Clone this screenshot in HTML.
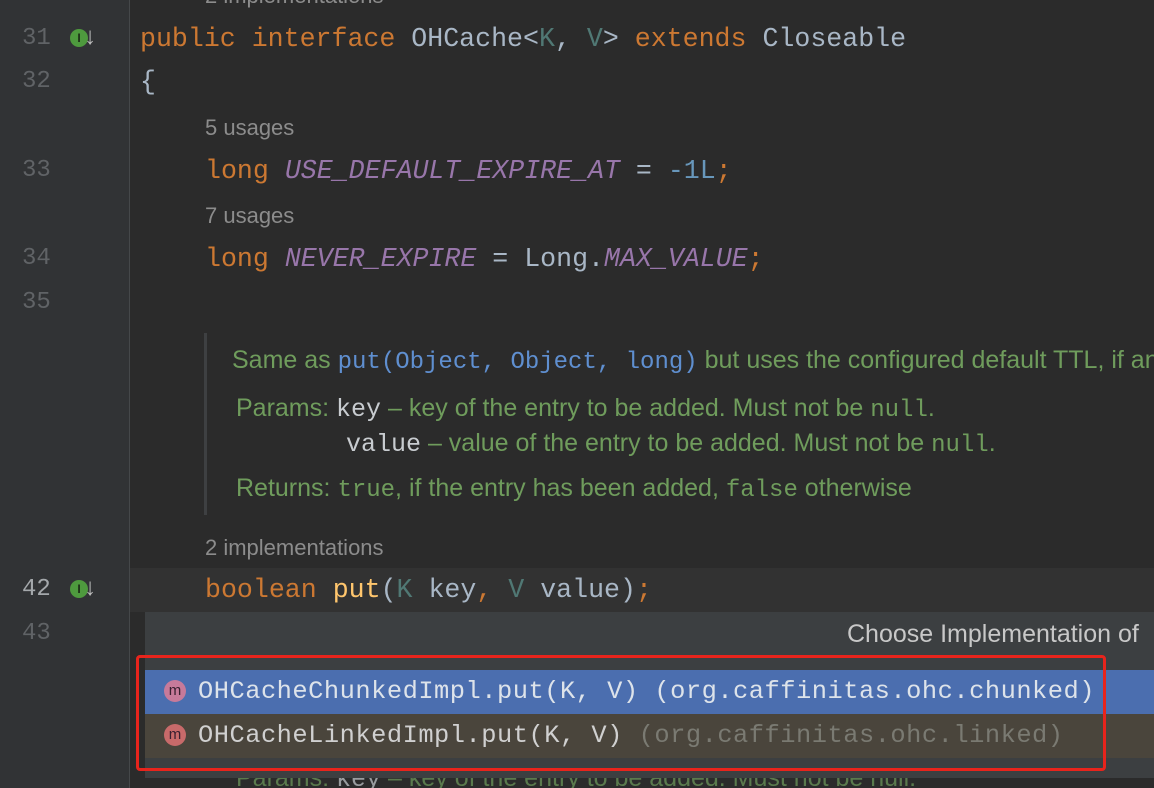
<!DOCTYPE html>
<html><head><style>
html,body{margin:0;width:1154px;height:788px;overflow:hidden}
body{background:#2b2b2b;position:relative;font-family:"Liberation Mono",monospace;font-size:26.6px;}
.g{position:absolute;left:0;top:0;width:129px;height:788px;background:#313335;border-right:1px solid #45484a}
.l{position:absolute;height:44px;line-height:44px;white-space:pre;color:#a9b7c6}
.n{color:#606366;font-size:24px;left:22px}
.k{color:#cc7832}.c{color:#9876aa;font-style:italic}.t{color:#507874}.num{color:#6897bb}.f{color:#ffc66d}
.h{color:#8c8c8c;font-family:"Liberation Sans",sans-serif;font-size:22px}
.d{color:#6f9c5c;font-family:"Liberation Sans",sans-serif;font-size:25px}
.dc{color:#5f8fd0;font-family:"Liberation Mono",monospace;font-size:24px}
.dm{color:#c8ccd0;font-family:"Liberation Mono",monospace;font-size:25px}
.dg{color:#6f9c5c;font-family:"Liberation Mono",monospace;font-size:24px}
.ic{position:absolute;width:18px;height:18px;border-radius:50%;background:#4e9a3e;color:#1b2b16;font:bold 12px "Liberation Sans";text-align:center;line-height:18px}
.m{display:inline-block;width:22px;height:22px;border-radius:50%;background:#c77a9a;color:#3a2030;font:15px "Liberation Sans";text-align:center;line-height:21px;vertical-align:middle;margin-right:12px;letter-spacing:0}
</style></head><body>
<div class="g"></div>
<div class="l h" style="left:205px;top:-26px">2 implementations</div>
<div class="l n" style="top:17px">31</div>
<div class="ic" style="left:70px;top:29px">I</div><div class="l" style="left:83px;top:17px;color:#bbb;font-size:24px">↓</div>
<div class="l" style="left:140px;top:17px"><span class="k">public interface</span> OHCache&lt;<span class="t">K</span>, <span class="t">V</span>&gt; <span class="k">extends</span> Closeable</div>
<div class="l n" style="top:60px">32</div>
<div class="l" style="left:140px;top:60px">{</div>
<div class="l h" style="left:205px;top:106px">5 usages</div>
<div class="l n" style="top:149px">33</div>
<div class="l" style="left:205px;top:149px"><span class="k">long</span> <span class="c">USE_DEFAULT_EXPIRE_AT</span> = <span class="num">-1L</span><span class="k">;</span></div>
<div class="l h" style="left:205px;top:194px">7 usages</div>
<div class="l n" style="top:237px">34</div>
<div class="l" style="left:205px;top:237px"><span class="k">long</span> <span class="c">NEVER_EXPIRE</span> = Long.<span class="c">MAX_VALUE</span><span class="k">;</span></div>
<div class="l n" style="top:281px">35</div>
<div style="position:absolute;left:204px;top:333px;width:3px;height:182px;background:#3e4042"></div>
<div class="l d" style="left:232px;top:338px">Same as <span class="dc">put(Object, Object, long)</span> but uses the configured default TTL, if any.</div>
<div class="l d" style="left:236px;top:386px">Params: <span class="dm">key</span> – key of the entry to be added. Must not be <span class="dg">null</span>.</div>
<div class="l d" style="left:346px;top:421px"><span class="dm">value</span> – value of the entry to be added. Must not be <span class="dg">null</span>.</div>
<div class="l d" style="left:236px;top:466px">Returns: <span class="dg">true</span>, if the entry has been added, <span class="dg">false</span> otherwise</div>
<div class="l h" style="left:205px;top:526px">2 implementations</div>
<div style="position:absolute;left:130px;top:568px;width:1024px;height:44px;background:#323232"></div>
<div class="l n" style="top:568px;color:#a4a8ab">42</div>
<div class="ic" style="left:70px;top:580px">I</div><div class="l" style="left:83px;top:568px;color:#bbb;font-size:24px">↓</div>
<div class="l" style="left:205px;top:568px"><span class="k">boolean</span> <span class="f">put</span>(<span class="t">K</span> key<span class="k">,</span> <span class="t">V</span> value)<span class="k">;</span></div>
<div class="l n" style="top:612px">43</div>
<div class="l d" style="left:236px;top:756px;opacity:.7">Params: <span class="dm">key</span> – key of the entry to be added. Must not be null.</div>
<div style="position:absolute;left:145px;top:612px;width:1009px;height:166px;background:#3c3f41"></div>
<div class="l" style="left:847px;top:619px;font:25px 'Liberation Sans',sans-serif;color:#c8c8c8;top:620px">Choose Implementation of</div>
<div style="position:absolute;left:145px;top:670px;width:1009px;height:44px;background:#4b6eaf"></div>
<div style="position:absolute;left:145px;top:714px;width:1009px;height:44px;background:#4a453c"></div>
<div class="l" style="left:164px;top:670px;color:#dde3ea;font-size:25.4px;letter-spacing:0.5px"><span class="m">m</span>OHCacheChunkedImpl.put(K, V) (org.caffinitas.ohc.chunked)</div>
<div class="l" style="left:164px;top:714px;color:#d0d0d0;font-size:25.4px;letter-spacing:0.5px"><span class="m" style="background:#c86a6a">m</span>OHCacheLinkedImpl.put(K, V) <span style="color:#7a7a72">(org.caffinitas.ohc.linked)</span></div>
<div style="position:absolute;left:136px;top:655px;width:964px;height:110px;border:3.5px solid #e8241c;border-radius:4px"></div>
</body></html>
